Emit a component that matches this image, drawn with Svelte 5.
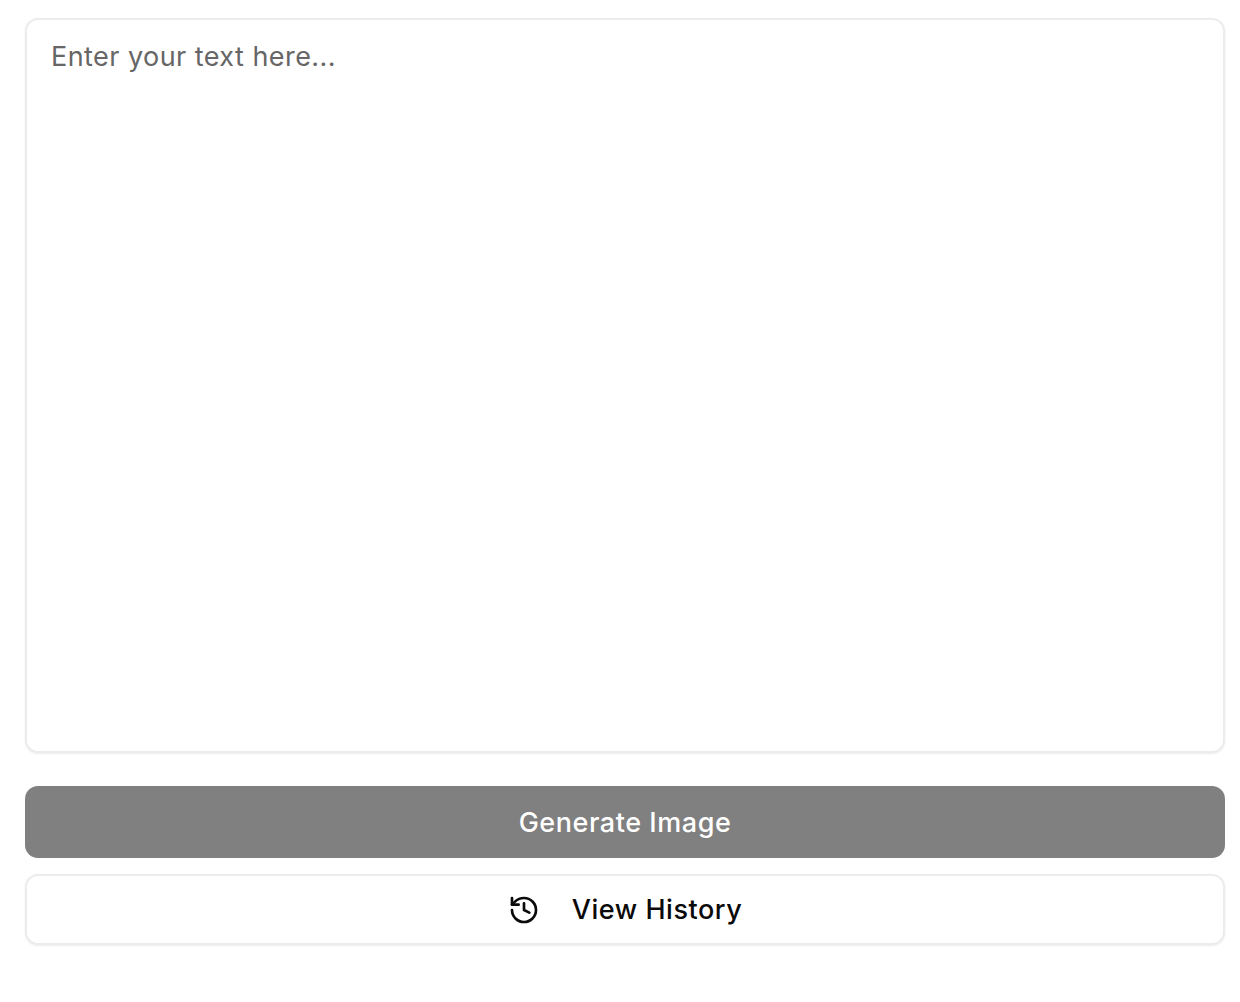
<script lang="ts">
  let text = $state('');
</script>

<main class="page">
  <textarea class="prompt" placeholder="Enter your text here..." bind:value={text}></textarea>

  <button type="button" class="btn-generate" disabled={!text}>Generate Image</button>

  <button type="button" class="btn-history">
    <svg class="icon" viewBox="0 0 24 24" fill="none" stroke="currentColor" stroke-width="2" stroke-linecap="round" stroke-linejoin="round" aria-hidden="true">
      <path d="M3 12a9 9 0 1 0 9-9 9.75 9.75 0 0 0-6.74 2.74L3 8" />
      <path d="M3 3v5h5" />
      <path d="M12 7v5l4 2" />
    </svg>
    <span>View History</span>
  </button>
</main>

<style>
  :global(body) {
    background: #fff;
    font-family: 'Inter', 'Liberation Sans', sans-serif;
  }

  .page {
    display: flex;
    flex-direction: column;
    box-sizing: border-box;
    height: 1002px;
    padding: 18px 15px 0 25px;
  }

  .prompt {
    box-sizing: border-box;
    display: block;
    width: 100%;
    height: 735px;
    margin: 0;
    padding: 19px 24px;
    border: 2px solid #ececec;
    border-radius: 13px;
    outline: none;
    resize: none;
    background: #fff;
    color: #111;
    font: 400 27px/36px 'Inter', 'Liberation Sans', sans-serif;
    letter-spacing: 0.45px;
    box-shadow: 0 1px 2px rgba(0, 0, 0, 0.08);
  }

  .prompt::placeholder {
    color: #666;
    opacity: 1;
  }

  .btn-generate,
  .btn-history {
    box-sizing: border-box;
    width: 100%;
    font: 500 27px/36px 'Inter', 'Liberation Sans', sans-serif;
    letter-spacing: 0.55px;
    border-radius: 13px;
    cursor: pointer;
  }

  .btn-generate {
    height: 72px;
    margin-top: 33px;
    padding-top: 2px;
    border: none;
    background: #808080;
    color: #fff;
  }

  .btn-history {
    display: flex;
    align-items: center;
    justify-content: center;
    gap: 32px;
    height: 71px;
    margin-top: 16px;
    padding-top: 2px;
    border: 2px solid #ececec;
    background: #fff;
    color: #0a0a0a;
    box-shadow: 0 1px 2px rgba(0, 0, 0, 0.08);
  }

  .icon {
    width: 32px;
    height: 32px;
    flex: none;
  }
</style>
